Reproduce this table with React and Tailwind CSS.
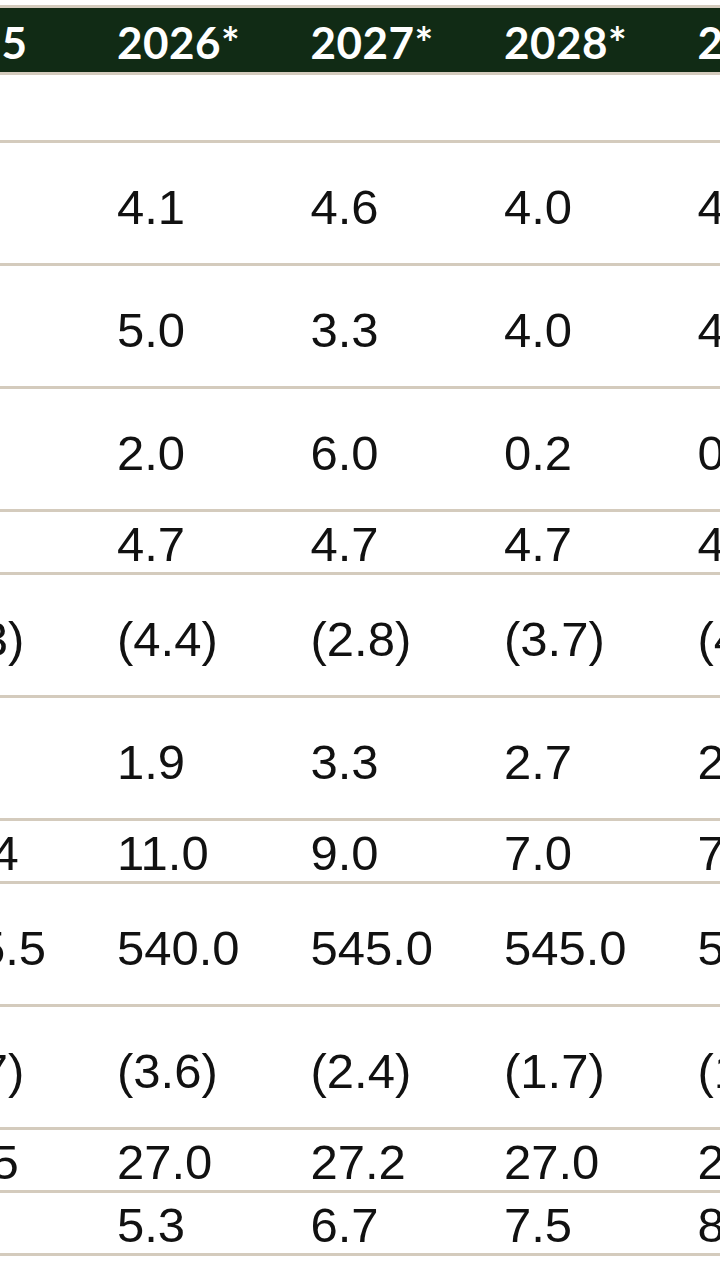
import React from 'react'

const years = ['2025', '2026*', '2027*', '2028*', '2029*']

const rows = [
  { tall: true, values: ['3.2', '4.1', '4.6', '4.0', '4.0'] },
  { tall: true, values: ['4.5', '5.0', '3.3', '4.0', '4.0'] },
  { tall: true, values: ['1.2', '2.0', '6.0', '0.2', '0.2'] },
  { tall: false, values: ['4.7', '4.7', '4.7', '4.7', '4.7'] },
  { tall: true, values: ['(3.3)', '(4.4)', '(2.8)', '(3.7)', '(4.0)'] },
  { tall: true, values: ['0.8', '1.9', '3.3', '2.7', '2.5'] },
  { tall: false, values: ['10.4', '11.0', '9.0', '7.0', '7.0'] },
  { tall: true, values: ['535.5', '540.0', '545.0', '545.0', '550.0'] },
  { tall: true, values: ['(3.7)', '(3.6)', '(2.4)', '(1.7)', '(1.5)'] },
  { tall: false, values: ['26.5', '27.0', '27.2', '27.0', '27.0'] },
  { tall: false, values: ['4.0', '5.3', '6.7', '7.5', '8.0'] },
]

function Cells({ values, className }) {
  return (
    <div className="-ml-[76.5px] flex">
      {values.map((v, i) => (
        <div key={i} className={`w-[193.5px] shrink-0 whitespace-nowrap ${className}`}>
          {v}
        </div>
      ))}
    </div>
  )
}

export default function App() {
  return (
    <div className="h-[1280px] w-[720px] overflow-hidden bg-white pt-[5px]">
      {/* header */}
      <div className="border-y-[3px] border-[#d4cbbd]">
        <div className="flex h-[64px] items-center bg-[#112b15] pt-[4px]">
          <Cells
            values={years}
            className="font-['Lato',sans-serif] text-[44px] font-bold leading-none tracking-[0.5px] text-white"
          />
        </div>
      </div>

      {/* spacer row */}
      <div className="h-[68px] border-b-[3px] border-[#d4cbbd]" />

      {rows.map((row, i) => (
        <div
          key={i}
          className={`flex items-center border-b-[3px] border-[#d4cbbd] ${row.tall ? 'h-[123px] pt-[9px]' : 'h-[63px] pt-[5px]'}`}
        >
          <Cells
            values={row.values}
            className="font-['Liberation_Sans',Arial,sans-serif] text-[49px] leading-none text-[#111]"
          />
        </div>
      ))}
    </div>
  )
}
